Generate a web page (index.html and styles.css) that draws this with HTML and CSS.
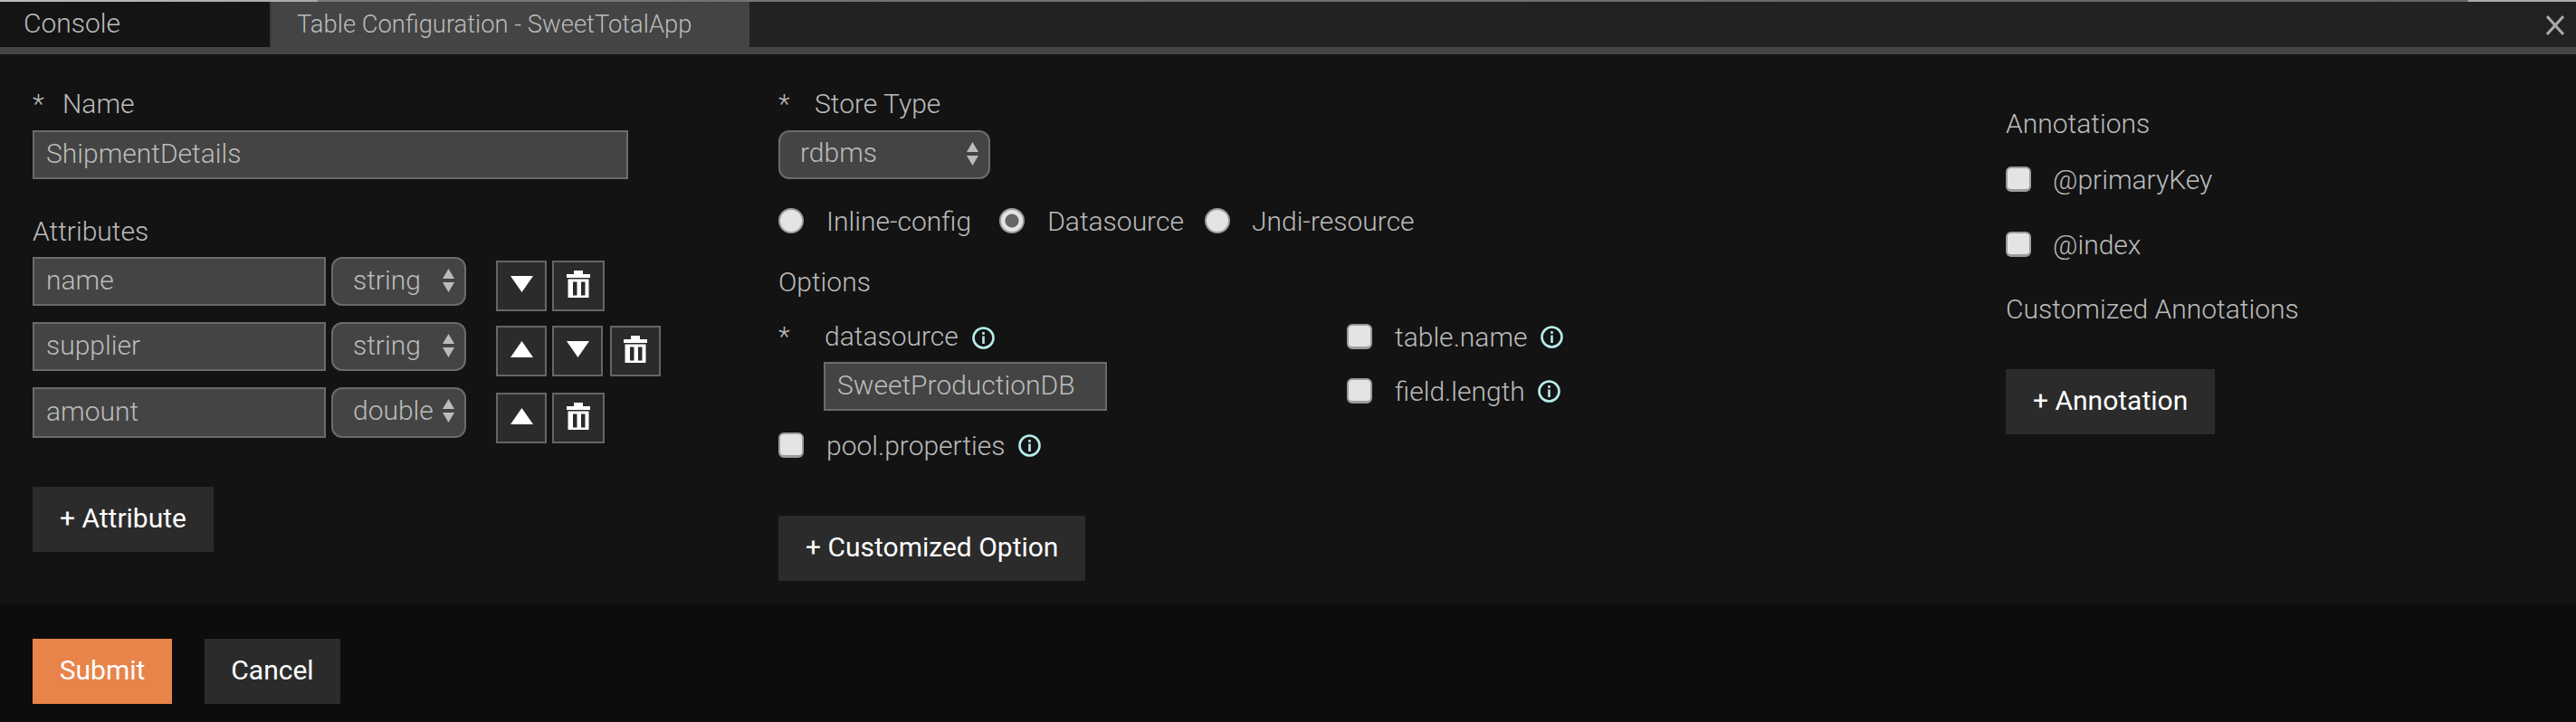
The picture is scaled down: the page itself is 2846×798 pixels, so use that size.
FILE: index.html
```html
<!DOCTYPE html>
<html lang="en">
<head>
  <meta charset="UTF-8" />
  <title>Table Configuration - SweetTotalApp</title>
  <link rel="stylesheet" href="styles.css">
</head>
<body>

  <svg class="defs" width="0" height="0">
    <symbol id="icon-down" viewBox="0 0 25 18"><polygon points="0,0 25,0 12.5,18" fill="#fff" /></symbol>
    <symbol id="icon-up" viewBox="0 0 25 18"><polygon points="12.5,0 25,18 0,18" fill="#fff" /></symbol>
    <symbol id="icon-trash" viewBox="0 0 26 30"><path fill="#fff" fill-rule="evenodd" d="M8 0h10v4h8v4H0V4h8zM1.500 9.500h23V30h-23zM7 12.500v15h4.500v-15zM16 12.500v15h4.500v-15z" /></symbol>
    <symbol id="icon-info" viewBox="0 0 25 25"><circle cx="12.500" cy="12.500" r="11" fill="none" stroke="#b5ecea" stroke-width="2.600" /><rect x="11.200" y="10.500" width="2.600" height="8.500" fill="#b5ecea" /><rect x="11.200" y="6" width="2.600" height="2.800" fill="#b5ecea" /></symbol>
    <symbol id="icon-sort" viewBox="0 0 13 26"><polygon points="6.500,0 13,11 0,11" fill="#bbb" /><polygon points="0,15 13,15 6.500,26" fill="#bbb" /></symbol>
  </svg>

  <div class="tabs">
    <div class="tab">Console</div>
    <div class="tab tab-active">Table Configuration - SweetTotalApp</div>
    <svg class="close" width="20" height="22" viewBox="0 0 20 22"><path d="M1 1l18 20M19 1L1 21" stroke="#aaa" stroke-width="3" fill="none" /></svg>
  </div>

  <div class="main">

    <!-- left column -->
    <section class="col col-left">
      <div class="label"><span class="req req-name">*</span>Name</div>
      <input class="text name-input" value="ShipmentDetails">

      <div class="label attr-title">Attributes</div>
      <div class="attr-list">
        <div class="attr-row">
          <input class="text attr-input" value="name">
          <div class="select attr-select">string<svg class="sort"><use href="#icon-sort" /></svg></div>
          <div class="attr-btns">
            <button class="icon-btn"><svg class="ico-arrow"><use href="#icon-down" /></svg></button>
            <button class="icon-btn wide"><svg class="ico-trash"><use href="#icon-trash" /></svg></button>
          </div>
        </div>
        <div class="attr-row">
          <input class="text attr-input" value="supplier">
          <div class="select attr-select">string<svg class="sort"><use href="#icon-sort" /></svg></div>
          <div class="attr-btns">
            <button class="icon-btn"><svg class="ico-arrow"><use href="#icon-up" /></svg></button>
            <button class="icon-btn"><svg class="ico-arrow"><use href="#icon-down" /></svg></button>
            <button class="icon-btn last"><svg class="ico-trash"><use href="#icon-trash" /></svg></button>
          </div>
        </div>
        <div class="attr-row tall">
          <input class="text attr-input" value="amount">
          <div class="select attr-select">double<svg class="sort"><use href="#icon-sort" /></svg></div>
          <div class="attr-btns">
            <button class="icon-btn"><svg class="ico-arrow"><use href="#icon-up" /></svg></button>
            <button class="icon-btn wide"><svg class="ico-trash"><use href="#icon-trash" /></svg></button>
          </div>
        </div>
      </div>

      <button class="btn add-attr">+ Attribute</button>
    </section>

    <!-- middle column -->
    <section class="col col-mid">
      <div class="label"><span class="req req-store">*</span>Store Type</div>
      <div class="select store-select">rdbms<svg class="sort"><use href="#icon-sort" /></svg></div>

      <div class="radios">
        <label class="check"><input type="radio" name="src">Inline-config</label>
        <label class="check"><input type="radio" name="src" checked>Datasource</label>
        <label class="check jndi"><input type="radio" name="src">Jndi-resource</label>
      </div>

      <div class="label options-title">Options</div>
      <div class="options">
        <div class="opt-col">
          <div class="label opt-req"><span class="req req-opt">*</span>datasource<svg class="info"><use href="#icon-info" /></svg></div>
          <input class="text ds-input" value="SweetProductionDB">
          <label class="check pool"><input type="checkbox">pool.properties<svg class="info"><use href="#icon-info" /></svg></label>
        </div>
        <div class="opt-col opt-right">
          <label class="check"><input type="checkbox">table.name<svg class="info"><use href="#icon-info" /></svg></label>
          <label class="check"><input type="checkbox">field.length<svg class="info"><use href="#icon-info" /></svg></label>
        </div>
      </div>

      <button class="btn add-option">+ Customized Option</button>
    </section>

    <!-- right column -->
    <section class="col col-right">
      <div class="label">Annotations</div>
      <label class="check anno"><input type="checkbox">@primaryKey</label>
      <label class="check anno"><input type="checkbox">@index</label>
      <div class="label custom-title">Customized Annotations</div>
      <button class="btn add-anno">+ Annotation</button>
    </section>

  </div>

  <div class="footer">
    <button class="btn submit">Submit</button>
    <button class="btn cancel">Cancel</button>
  </div>

</body>
</html>
```

FILE: styles.css
```css
* {
  box-sizing: border-box;
}

html, body {
  margin: 0;
  height: 100%;
}

body {
  display: flex;
  flex-direction: column;
  height: 798px;
  overflow: hidden;
  background: #131313;
  color: #bbb;
  font-family: Roboto, "Liberation Sans", sans-serif;
  font-size: 30px;
  font-weight: 300;
}

.defs {
  position: absolute;
}

/* tab bar */
.tabs {
  display: flex;
  align-items: stretch;
  height: 60px;
  padding-top: 2px;
  background: linear-gradient(to right, #bbb, #aaa 350px, #777 352px, #666 2726px, #aaa 2727px) top / 100% 2px no-repeat, #222;
  border-bottom: 8px solid #444;
}

.tab {
  width: 298px;
  padding-left: 26px;
  background: #141414;
  line-height: 48px;
}

.tab-active {
  width: 530px;
  padding-left: 28px;
  background: #444;
  border-left: 2px solid #3a3a3a;
  font-size: 27.400px;
  line-height: 50px;
}

.close {
  margin: 15px 13px 0 auto;
}

/* columns */
.main {
  flex: 1;
  display: grid;
  grid-template-columns: 824px 1356px 1fr;
  padding: 38px 0 0 36px;
}

.col {
  display: flex;
  flex-direction: column;
  align-items: flex-start;
}

.label {
  height: 34px;
  line-height: 34px;
}

.req {
  display: inline-block;
  width: 33px;
}

.req-store {
  width: 40px;
}

.req-opt {
  width: 51px;
}

.text {
  height: 54px;
  padding: 0 12px 3px 13px;
  background: #444;
  border: 2px solid #6b6b6b;
  color: #bbb;
  font: inherit;
  outline: none;
}

.name-input {
  width: 658px;
  margin-top: 12px;
}

.attr-title {
  margin-top: 41px;
}

.attr-list {
  display: flex;
  flex-direction: column;
  gap: 18px;
  margin-top: 11px;
}

.attr-row {
  display: flex;
  height: 54px;
}

.attr-row.tall {
  height: 56px;
}

.attr-row.tall .text,
.attr-row.tall .select {
  height: 56px;
}

.attr-row.tall .attr-btns {
  margin-top: 6px;
}

.attr-input {
  width: 324px;
}

.select {
  position: relative;
  height: 54px;
  padding-left: 22px;
  background: #444;
  border: 2px solid #6b6b6b;
  border-radius: 12px;
  line-height: 48px;
}

.attr-select {
  width: 149px;
  margin-left: 6px;
}

.store-select {
  width: 234px;
  margin-top: 12px;
  line-height: 46px;
}

.sort {
  position: absolute;
  top: 11px;
  right: 11px;
  width: 13px;
  height: 26px;
}

.attr-btns {
  display: flex;
  gap: 6px;
  margin: 4px 0 0 33px;
}

.icon-btn {
  display: flex;
  align-items: center;
  justify-content: center;
  width: 56px;
  height: 56px;
  padding: 0 0 5px;
  background: #2b2b2b;
  border: 2px solid #666;
}

.icon-btn.wide {
  width: 58px;
}

.icon-btn.last {
  margin-left: 2px;
}

.ico-arrow {
  width: 25px;
  height: 18px;
}

.ico-trash {
  width: 26px;
  height: 30px;
}

.btn {
  height: 72px;
  padding: 0 30px 4px;
  background: #2b2b2b;
  border: 0;
  color: #fff;
  font: inherit;
  font-weight: 400;
}

.add-attr {
  margin-top: 54px;
}

/* checks and radios */
.check {
  display: flex;
  align-items: center;
  height: 34px;
}

.check input {
  appearance: none;
  flex: none;
  width: 28px;
  height: 28px;
  margin: 0 25px 0 0;
  background: #e4e4e4;
  border: 2px solid #9c9c9c;
  border-bottom-width: 3px;
  border-radius: 6px;
}

.check input[type="radio"] {
  border-radius: 50%;
  border-bottom-width: 2px;
}

.check input[type="radio"]:checked {
  background: radial-gradient(circle, #666 0 7px, #e4e4e4 8px);
}

.radios {
  display: flex;
  gap: 31px;
  margin-top: 29px;
}

.jndi {
  margin-left: -8px;
}

.jndi input {
  margin-right: 24px;
}

.options-title {
  margin-top: 34px;
}

.options {
  display: grid;
  grid-template-columns: 628px 1fr;
  margin-top: 26px;
}

.opt-col {
  display: flex;
  flex-direction: column;
  align-items: flex-start;
}

.ds-input {
  width: 313px;
  margin: 11px 0 0 50px;
}

.pool {
  margin-top: 21px;
}

.opt-right {
  gap: 26px;
}

.info {
  width: 25px;
  height: 25px;
  margin-left: 15px;
  vertical-align: -4px;
}

.check .info {
  margin-left: 14px;
}

.add-option {
  margin-top: 61px;
}

/* annotations */
.col-right .label:first-child {
  margin-top: 22px;
}

.anno {
  margin-top: 27px;
}

.anno + .anno {
  margin-top: 38px;
}

.anno input {
  margin-right: 24px;
}

.custom-title {
  margin-top: 38px;
}

.add-anno {
  margin-top: 49px;
}

/* footer */
.footer {
  display: flex;
  gap: 36px;
  height: 130px;
  padding: 38px 36px 0;
  background: #0d0d0d;
}

.submit {
  width: 154px;
  padding: 0 0 4px;
  background: #e8844a;
}

.cancel {
  width: 150px;
  padding: 0 0 4px;
}
```
